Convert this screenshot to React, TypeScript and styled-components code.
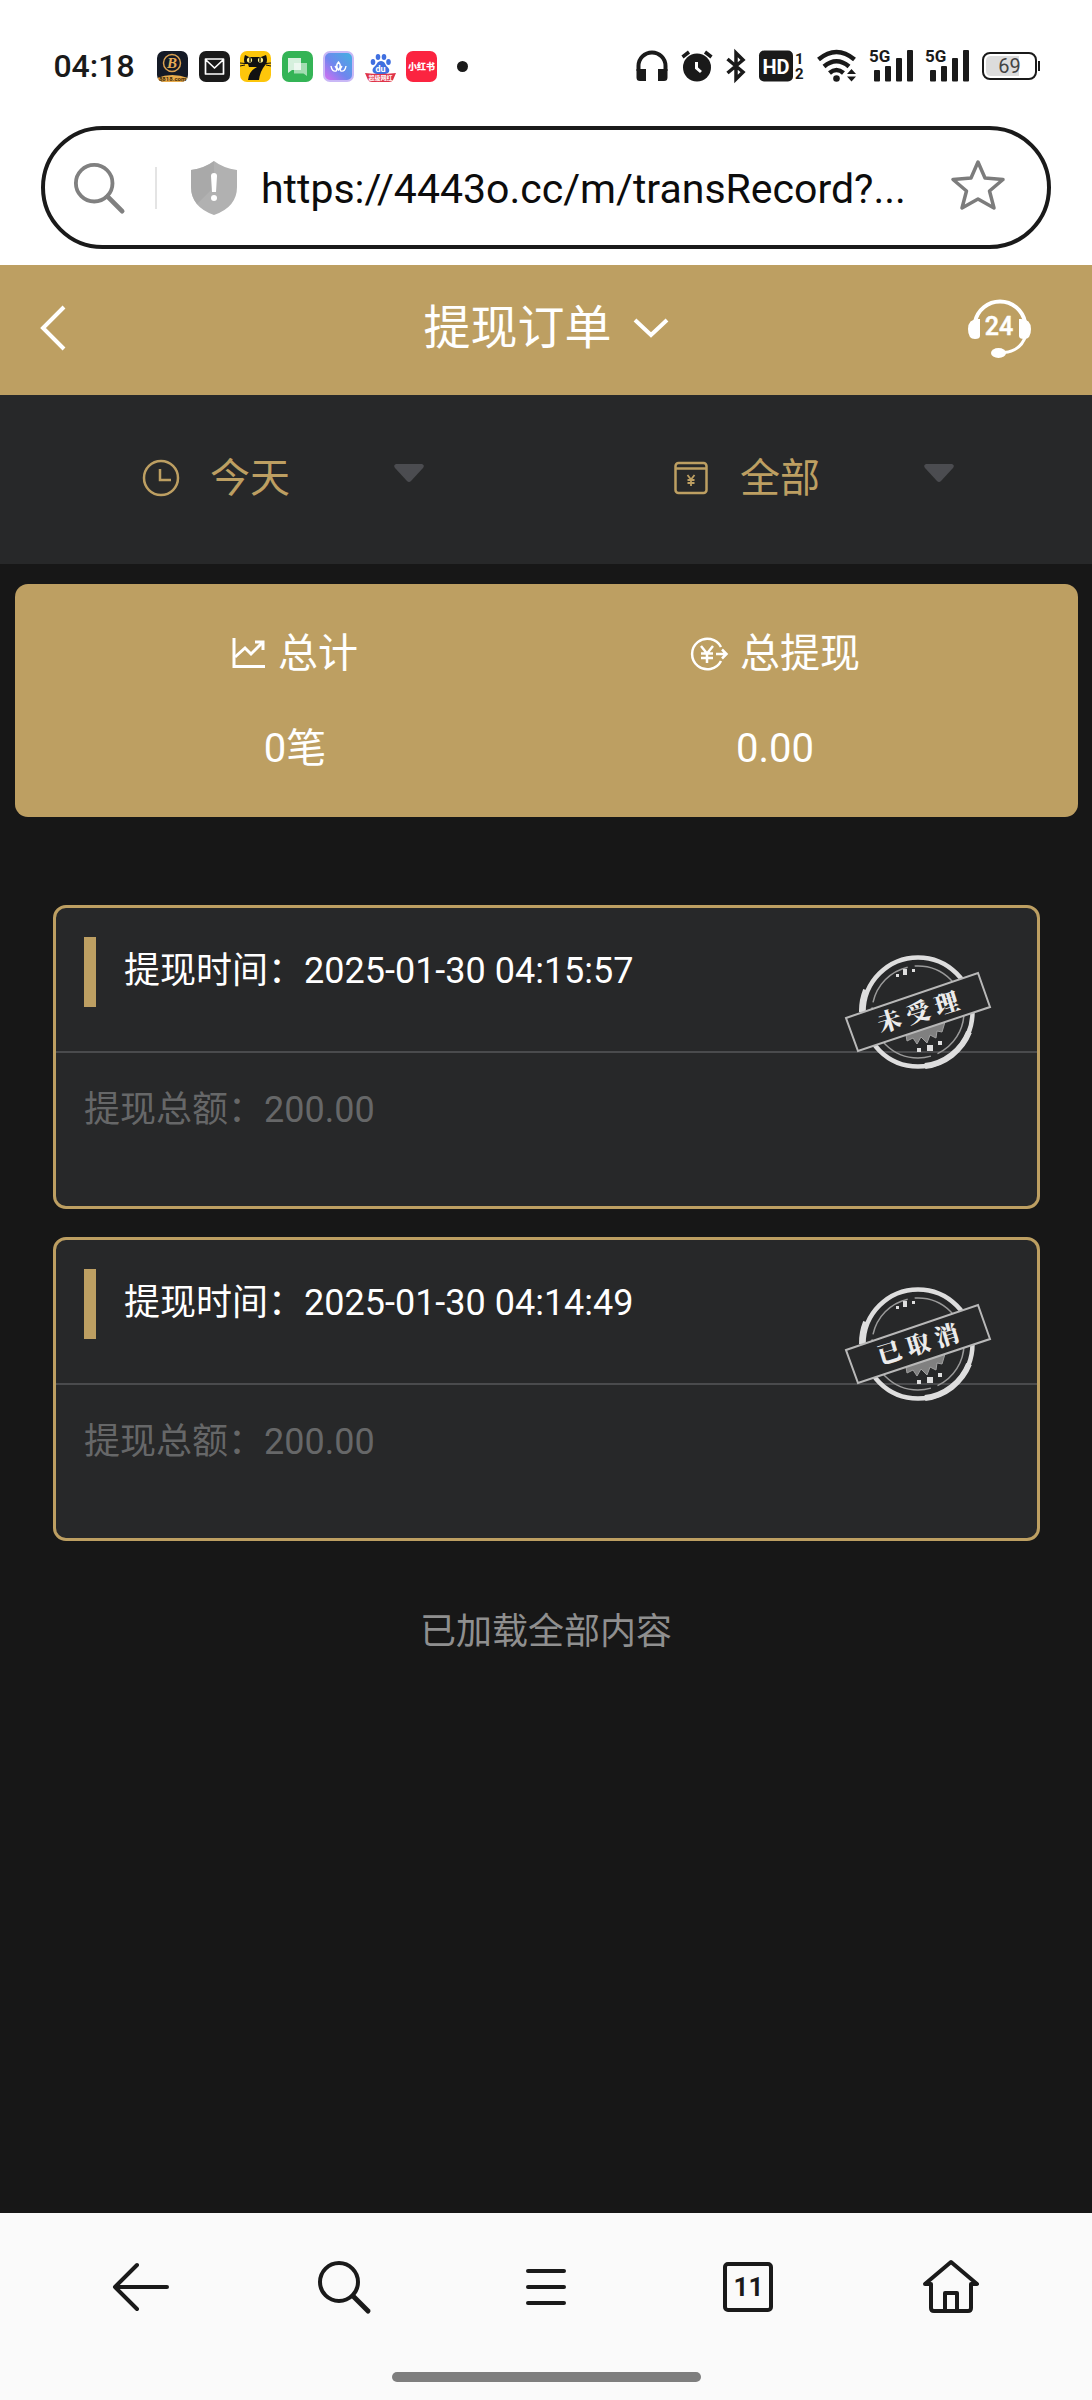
import React from "react";
import styled, { createGlobalStyle } from "styled-components";

const GOLD = "#bd9f62";
const INK = "#1a1a1a";
const FONT = `Roboto, "Noto Sans CJK SC", sans-serif`;

const GlobalStyle = createGlobalStyle`
  *, *::before, *::after { box-sizing: border-box; }
  body { margin: 0; background: #171717; font-family: ${FONT}; }
  button, input, select { font-family: inherit; margin: 0; }
  svg { display: block; flex: none; overflow: visible; }
`;

const Screen = styled.div`
  display: flex;
  flex-direction: column;
  min-height: 100vh;
  background: #171717;
`;

const StatusBar = styled.div`
  display: flex;
  align-items: center;
  justify-content: space-between;
  height: 112px;
  padding: 20px 52px 0;
  background: #fff;
  color: ${INK};
`;

const StatusGroup = styled.div`
  display: flex;
  align-items: center;
`;

const Clock = styled.time`
  font-size: 32px;
  line-height: 36px;
  font-weight: 500;
  width: 84px;
  text-align: center;
`;

const AppIcons = styled.div`
  display: flex;
  justify-content: space-between;
  width: 280px;
  margin: 0 20px 0 21px;
`;

const MoreDot = styled.span`
  width: 11px;
  height: 11px;
  border-radius: 50%;
  background: ${INK};
`;

const Indicators = styled(StatusGroup)`
  gap: 13px;
`;

const AddressArea = styled.div`
  padding: 14px 41px 16px;
  background: #fff;
`;

const AddressBar = styled.form`
  display: flex;
  align-items: center;
  height: 123px;
  padding: 0 42px 0 28px;
  border: 4px solid ${INK};
  border-radius: 62px;
  background: #fff;
`;

const BarDivider = styled.span`
  width: 2px;
  height: 42px;
  margin: 0 34px 0 30px;
  background: #e4e4e4;
`;

const UrlInput = styled.input`
  flex: 1;
  min-width: 0;
  height: 56px;
  margin: 0 24px;
  padding: 2px 0 0;
  border: 0;
  outline: 0;
  background: transparent;
  color: #0c0c0c;
  font-size: 41px;
  text-overflow: ellipsis;
`;

const IconButton = styled.button`
  display: flex;
  align-items: center;
  justify-content: center;
  padding: 0;
  border: 0;
  background: transparent;
  color: inherit;
  cursor: pointer;
`;

const StarButton = styled(IconButton)`
  padding-bottom: 5px;
`;

const PageHeader = styled.header`
  display: grid;
  grid-template-columns: 184px 1fr 184px;
  align-items: center;
  height: 130px;
  padding-bottom: 4px;
  background: ${GOLD};
  color: #fff;
`;

const BackButton = styled(IconButton)`
  justify-content: flex-start;
  padding-left: 40px;
`;

const TitleButton = styled(IconButton)`
  gap: 21px;
  font-size: 47px;
  line-height: 60px;
`;

const PageTitle = styled.h1`
  margin: 0;
  font: inherit;
`;

const Filters = styled.div`
  display: grid;
  grid-template-columns: 1fr 1fr;
  height: 169px;
  padding: 0 14px 4px 18px;
  background: #272829;
`;

const Filter = styled.label`
  display: flex;
  align-items: center;
  justify-content: center;
  color: ${GOLD};
`;

const FilterIcon = styled.span`
  display: flex;
  justify-content: center;
  width: 38px;
  margin-right: 30px;
`;

const FilterSelect = styled.select`
  appearance: none;
  width: 184px;
  height: 62px;
  padding: 2px 0 0;
  border: 0;
  outline: 0;
  background: transparent;
  color: ${GOLD};
  font-size: 40px;
`;

const Caret = styled.span`
  display: flex;
  padding-bottom: 8px;
`;

const Summary = styled.section`
  display: grid;
  grid-template-columns: 1fr 1fr;
  margin: 20px 14px 0 15px;
  padding: 40px 63px 38px 40px;
  border-radius: 13px;
  background: ${GOLD};
  color: #fff;
`;

const Total = styled.div`
  display: flex;
  flex-direction: column;
  align-items: center;
  gap: 35px;
  font-size: 40px;
  line-height: 60px;
`;

const TotalLabel = styled.div`
  display: flex;
  align-items: center;
  gap: 12px;
`;

const Records = styled.main`
  display: flex;
  flex-direction: column;
  gap: 28px;
  padding: 88px 52px 0 53px;
`;

const Card = styled.article`
  position: relative;
  height: 304px;
  border: 3px solid ${GOLD};
  border-radius: 13px;
  background: #272829;
  font-size: 36px;
  line-height: 52px;
`;

const CardHead = styled.div`
  display: flex;
  align-items: flex-start;
  height: 145px;
  padding: 29px 28px 0;
  border-bottom: 2px solid #4a4b4d;
  color: #fff;
`;

const Marker = styled.span`
  width: 12px;
  height: 70px;
  margin-right: 28px;
  background: ${GOLD};
`;

const When = styled.span`
  padding-top: 8px;
`;

const CardBody = styled.div`
  padding: 31px 28px;
  color: #666768;
`;

const StampBox = styled.div`
  position: absolute;
  top: 46px;
  right: 46px;
`;

const EndNote = styled.p`
  margin: 65px 0 0;
  color: #8f8f8f;
  font-size: 36px;
  line-height: 52px;
  text-align: center;
`;

const BrowserBar = styled.footer`
  display: flex;
  flex-direction: column;
  align-items: center;
  gap: 46px;
  margin-top: auto;
  padding: 34px 40px 18px;
  background: #fafafa;
  color: ${INK};
`;

const BrowserNav = styled.nav`
  display: flex;
  align-self: stretch;
`;

const NavButton = styled(IconButton)`
  flex: 1;
  height: 79px;
`;

const TabCount = styled.span`
  display: flex;
  align-items: center;
  justify-content: center;
  width: 50px;
  height: 50px;
  border: 4px solid ${INK};
  border-radius: 5px;
  font-size: 26px;
  font-weight: 700;
`;

const HomeIndicator = styled.span`
  width: 309px;
  height: 10px;
  border-radius: 5px;
  background: #7e7e7e;
`;

const CoinApp = () => (
  <svg width="31" height="31" viewBox="0 0 31 31">
    <defs><clipPath id="coin"><rect width="31" height="31" rx="7" /></clipPath></defs>
    <g clipPath="url(#coin)">
      <rect width="31" height="31" fill="#141a26" />
      <circle cx="15" cy="12" r="8.500" fill="none" stroke="#d9a050" strokeWidth="1.500" />
      <path d="M0 27Q15 21 31 27V31H0Z" fill="#e9ac4b" />
    </g>
    <text x="15" y="17" textAnchor="middle" fontSize="15" fontWeight="700" fontStyle="italic" fontFamily="Liberation Serif, serif" fill="#e8ab55">B</text>
    <text x="15.500" y="30" textAnchor="middle" fontSize="6" fontWeight="700" fill="#3b2608">8818.com</text>
  </svg>
);

const MailApp = () => (
  <svg width="31" height="31" viewBox="0 0 31 31" fill="none">
    <rect width="31" height="31" rx="7" fill={INK} />
    <path d="M6.500 8H24.500V23H6.500ZM7 9L15.500 17L24 9" stroke="#fff" strokeWidth="1.700" strokeLinejoin="round" />
  </svg>
);

const CatApp = () => (
  <svg width="31" height="31" viewBox="0 0 31 31">
    <rect width="31" height="31" rx="7" fill="#fdc60b" />
    <path d="M5 4L9 6H21L26 4Q28 9 26 13Q20 20 19 29H8Q9 20 17 16H9L8 13H5Q3 9 5 4Z" fill="#111" />
    <circle cx="9.500" cy="9" r="2.600" fill="#fdf08a" />
    <circle cx="20.500" cy="9" r="2.600" fill="#fdf08a" />
    <path d="M10 7V11M20 7V11" stroke="#111" strokeWidth="1.400" />
    <path d="M0 12L5 12.500M0 15L5 14M31 12L26 12.500M31 15L26 14" stroke="#111" />
  </svg>
);

const ChatApp = () => (
  <svg width="31" height="31" viewBox="0 0 31 31">
    <rect width="31" height="31" rx="7" fill="#34b456" />
    <path d="M12 12H25V25L21.500 22.500H12Z" fill="#fff" opacity=".55" />
    <path d="M6 7H19V19H10L6 22Z" fill="#fff" opacity=".8" />
  </svg>
);

const LotusApp = () => (
  <svg width="31" height="31" viewBox="0 0 31 31">
    <defs>
      <linearGradient id="lotus" x1="0" y1="1" x2="1" y2="0">
        <stop offset="0" stopColor="#e06bf2" />
        <stop offset=".45" stopColor="#6f86ee" />
        <stop offset="1" stopColor="#3fb4e0" />
      </linearGradient>
    </defs>
    <rect x="1" y="1" width="29" height="29" rx="6" fill="url(#lotus)" stroke="#c9b8f6" strokeWidth="2" />
    <path d="M15.500 11Q12 15 15.500 19Q19 15 15.500 11ZM8 15Q9 21 13 20Q15 19 12 15M23 15Q22 21 18 20Q16 19 19 15" fill="none" stroke="#fff" strokeWidth="1.400" />
  </svg>
);

const PawApp = () => (
  <svg width="31" height="31" viewBox="0 0 31 31">
    <g fill="#3f6fe0">
      <ellipse cx="8" cy="11" rx="2.300" ry="3" />
      <ellipse cx="13" cy="6" rx="2.300" ry="3" />
      <ellipse cx="19" cy="6" rx="2.300" ry="3" />
      <ellipse cx="23.500" cy="11" rx="2.300" ry="3" />
      <path d="M16 10C12 10 12 14 9 16C6 19 8 23 12 23H20C24 23 26 19 22.500 16C20 14 20 10 16 10Z" />
    </g>
    <text x="15.500" y="21" textAnchor="middle" fontSize="9" fontWeight="700" fill="#fff">du</text>
    <path d="M0 22Q15 24 31 22L28 29Q27 31 24 31H7Q4 31 3 29Z" fill="#df3348" />
    <text x="15.500" y="29" textAnchor="middle" fontSize="6" fontWeight="700" fill="#fff">超级网红</text>
  </svg>
);

const RedApp = () => (
  <svg width="31" height="31" viewBox="0 0 31 31">
    <rect width="31" height="31" rx="7" fill="#fb2440" />
    <text x="15.500" y="19" textAnchor="middle" fontSize="9" fontWeight="900" fill="#fff">小红书</text>
  </svg>
);

const Headphones = () => (
  <svg width="32" height="32" viewBox="0 0 32 32">
    <path d="M2.500 21V16A13.500 13.500 0 0 1 29.500 16V21" fill="none" stroke={INK} strokeWidth="4" />
    <path d="M.5 19H10V31H4Q.5 31 .5 27.500ZM31.500 19H22V31H28Q31.500 31 31.500 27.500Z" fill={INK} />
  </svg>
);

const Alarm = () => (
  <svg width="32" height="32" viewBox="0 0 32 32" fill="none">
    <circle cx="16" cy="17.500" r="14" fill={INK} />
    <path d="M1.500 7L8 2M30.500 7L24 2" stroke={INK} strokeWidth="3.500" />
    <path d="M15.500 12V18L20 22" stroke="#fff" strokeWidth="3" />
  </svg>
);

const Bluetooth = () => (
  <svg width="20" height="32" viewBox="0 0 20 32" fill="none">
    <path d="M1.500 9L17 22L10 29V3L17 10L1.500 23" stroke={INK} strokeWidth="3.500" />
  </svg>
);

const HdVoice = () => (
  <svg width="45" height="32" viewBox="0 0 45 32">
    <rect y=".5" width="34" height="31" rx="5" fill={INK} />
    <text x="17" y="23.500" textAnchor="middle" fontSize="20" fontWeight="700" fill="#fff">HD</text>
    <text x="36" y="14" fontSize="15" fontWeight="700" fill={INK}>1</text>
    <text x="36" y="29" fontSize="15" fontWeight="700" fill={INK}>2</text>
  </svg>
);

const Wifi = () => (
  <svg width="40" height="32" viewBox="0 0 40 32" fill="none">
    <path d="M1.500 9.500Q19.500 -5.500 37.500 9.500M7 16.500Q19.500 6 32 16.500M12.500 23Q19.500 17 26.500 23" stroke={INK} strokeWidth="4.500" />
    <circle cx="19.500" cy="28.500" r="3.300" fill={INK} />
    <path d="M30 24L34.500 19L39 24ZM30 26.500L34.500 31.500L39 26.500Z" fill={INK} />
  </svg>
);

const Signal = () => (
  <svg width="43" height="32" viewBox="0 0 43 32" fill={INK}>
    <text x="-1" y="12" fontSize="17" fontWeight="700">5G</text>
    <rect x="4" y="20" width="6" height="11.500" rx="1" />
    <rect x="15" y="16" width="6" height="15.500" rx="1" />
    <rect x="26" y="8" width="6" height="23.500" rx="1" />
    <rect x="37" y="0" width="6" height="31.500" rx="1" />
  </svg>
);

const Battery = () => (
  <svg width="58" height="28" viewBox="0 0 58 28">
    <rect x="1" y="1" width="53" height="26" rx="7" fill="#fff" stroke={INK} strokeWidth="2" />
    <path d="M9 4H37V24H9Q4 24 4 19V9Q4 4 9 4Z" fill="#dcdcdc" />
    <rect x="56" y="9" width="2" height="10" fill={INK} />
    <text x="27.500" y="21" textAnchor="middle" fontSize="20" fill="#444">69</text>
  </svg>
);

const SearchGlyph = ({ color, size = 54 }: { color: string; size?: number }) => (
  <svg width={size} height={size} viewBox="0 0 54 54" fill="none" stroke={color} strokeWidth="4" strokeLinecap="round">
    <circle cx="22" cy="22" r="19" />
    <path d="M36 36L51 51" strokeWidth="5" />
  </svg>
);

const Shield = () => (
  <svg width="46" height="54" viewBox="0 0 46 54">
    <path d="M23 0Q32 7 46 9V26Q46 46 23 54Q0 46 0 26V9Q14 7 23 0Z" fill="#b1b1b1" />
    <path d="M23 0Q14 7 0 9V26Q0 36 6 43L23 26Z" fill="#a3a3a3" opacity=".6" />
    <path d="M20 15Q20 12 23 12Q26 12 26 15L25 31H21Z" fill="#fff" />
    <circle cx="23" cy="37" r="3" fill="#fff" />
  </svg>
);

const Star = () => (
  <svg width="54" height="52" viewBox="0 0 54 52" fill="none" stroke="#7c7c7c" strokeWidth="3.500" strokeLinejoin="round">
    <path d="M27 3L34 19L52 20.500L38.500 32L43 49L27 40L11 49L15.500 32L2 20.500L20 19Z" />
  </svg>
);

const Support = () => (
  <svg width="64" height="62" viewBox="0 0 64 62" fill="none" stroke="#fff">
    <path d="M7 25A25.500 25.500 0 0 1 57 25" strokeWidth="4" />
    <path d="M58 38Q53 54 36 55.500" strokeWidth="3" />
    <path d="M12 22Q0 21 0 32Q0 42 7 42Q12 42 12 39ZM51 22Q63 21 63 32Q63 42 56 42Q51 42 51 39Z" fill="#fff" stroke="none" />
    <ellipse cx="30.500" cy="56" rx="7.500" ry="5" fill="#fff" stroke="none" />
    <text x="31" y="38" textAnchor="middle" fontSize="25" fontWeight="500" fill="#fff" stroke="#fff" strokeWidth=".5">24</text>
  </svg>
);

const ClockGlyph = () => (
  <svg width="38" height="38" viewBox="0 0 38 38" fill="none" stroke={GOLD} strokeWidth="2.500">
    <circle cx="19" cy="19" r="17" />
    <path d="M18 10V21H29" />
  </svg>
);

const WalletGlyph = () => (
  <svg width="34" height="34" viewBox="0 0 34 34" fill="none" stroke={GOLD} strokeWidth="2.500">
    <rect x="1.500" y="2" width="31" height="30" rx="3" />
    <path d="M2 7.500H32" />
    <path d="M13.500 14L17 18.500L20.500 14M17 18V25M13.500 19H20.500M13.500 22H20.500" strokeWidth="1.800" />
  </svg>
);

const CaretGlyph = () => (
  <svg width="30" height="19" viewBox="0 0 30 19">
    <path d="M2 0H28Q31 1 29 4L17 17Q15 19 13 17L1 4Q-1 1 2 0Z" fill="#4b4c50" />
  </svg>
);

const ChartGlyph = () => (
  <svg width="34" height="34" viewBox="0 0 34 34" fill="none" stroke="#fff" strokeWidth="3">
    <path d="M2 1V29.500H33" />
    <path d="M3 20L13 11L19 17L30 6" />
    <path d="M23 5H31V13" />
  </svg>
);

const PayoutGlyph = () => (
  <svg width="38" height="34" viewBox="0 0 38 34" fill="none" stroke="#fff" strokeWidth="2.500">
    <path d="M31 10A15.300 15.300 0 1 0 31 24" />
    <path d="M11 9L17 16.500L23 9M17 16V26M11 16.500H23M11 21H23" />
    <path d="M26 17H35M32 12.500L36.500 17L32 21.500" />
  </svg>
);

const Stamp = ({ word }: { word: string }) => (
  <svg width="146" height="116" viewBox="0 0 146 116" fill="none" stroke="#dedede">
    <circle cx="73" cy="58" r="54.500" strokeWidth="4.500" />
    <path d="M21 36A56 56 0 0 0 17 58M80 112A54.500 54.500 0 0 0 124 78" strokeWidth="6" />
    <circle cx="73" cy="58" r="46" stroke="#9a9a9a" strokeWidth="1.500" strokeDasharray="52 7 90 5" />
    <g fill="#dedede" stroke="none">
      <rect x="51" y="20" width="3" height="3" />
      <rect x="58" y="15" width="4" height="6" />
      <rect x="67" y="15" width="3" height="3" />
      <rect x="72" y="94" width="4" height="4" />
      <rect x="82" y="91" width="6" height="6" />
      <rect x="93" y="87" width="4" height="4" />
    </g>
    <path d="M55 80L100 68L97 78L92 77L91 84L85 81L82 89L76 83L72 90L68 84L62 87L61 81Z" fill="#808080" stroke="#a0a0a0" />
    <path d="M1 64L133 19L145 53L13 97Z" fill="#272829" stroke="#b8b8b8" strokeWidth="2" />
    <text
      transform="translate(73 58) rotate(-17)"
      y="9"
      textAnchor="middle"
      fontSize="24"
      fontWeight="900"
      fontFamily='"Noto Serif CJK SC", "Noto Sans CJK SC", serif'
      fill="#ececec"
      stroke="none"
    >
      {word}
    </text>
  </svg>
);

const records = [
  { time: "2025-01-30 04:15:57", amount: "200.00", status: "未 受 理" },
  { time: "2025-01-30 04:14:49", amount: "200.00", status: "已 取 消" },
];

export default function App() {
  return (
    <Screen>
      <GlobalStyle />
      <StatusBar>
        <StatusGroup>
          <Clock>04:18</Clock>
          <AppIcons>
            <CoinApp /><MailApp /><CatApp /><ChatApp /><LotusApp /><PawApp /><RedApp />
          </AppIcons>
          <MoreDot />
        </StatusGroup>
        <Indicators>
          <Headphones /><Alarm /><Bluetooth /><HdVoice /><Wifi /><Signal /><Signal /><Battery />
        </Indicators>
      </StatusBar>

      <AddressArea>
        <AddressBar onSubmit={(e) => e.preventDefault()}>
          <IconButton type="submit" aria-label="搜索"><SearchGlyph color="#808080" size={52} /></IconButton>
          <BarDivider />
          <Shield />
          <UrlInput type="text" aria-label="网址" defaultValue="https://4443o.cc/m/transRecord?..." />
          <StarButton type="button" aria-label="收藏"><Star /></StarButton>
        </AddressBar>
      </AddressArea>

      <PageHeader>
        <BackButton aria-label="返回">
          <svg width="26" height="46" viewBox="0 0 26 46" fill="none" stroke="#fff" strokeWidth="4">
            <path d="M24 2L3 23L24 44" />
          </svg>
        </BackButton>
        <TitleButton>
          <PageTitle>提现订单</PageTitle>
          <svg width="36" height="20" viewBox="0 0 36 20" fill="none" stroke="#fff" strokeWidth="4">
            <path d="M2 2L18 17L34 2" />
          </svg>
        </TitleButton>
        <IconButton aria-label="客服"><Support /></IconButton>
      </PageHeader>

      <Filters>
        <Filter>
          <FilterIcon><ClockGlyph /></FilterIcon>
          <FilterSelect aria-label="日期"><option>今天</option></FilterSelect>
          <Caret><CaretGlyph /></Caret>
        </Filter>
        <Filter>
          <FilterIcon><WalletGlyph /></FilterIcon>
          <FilterSelect aria-label="类型"><option>全部</option></FilterSelect>
          <Caret><CaretGlyph /></Caret>
        </Filter>
      </Filters>

      <Summary>
        <Total>
          <TotalLabel><ChartGlyph />总计</TotalLabel>
          <span>0笔</span>
        </Total>
        <Total>
          <TotalLabel><PayoutGlyph />总提现</TotalLabel>
          <span>0.00</span>
        </Total>
      </Summary>

      <Records>
        {records.map((r) => (
          <Card key={r.time}>
            <CardHead>
              <Marker />
              <When>提现时间：{r.time}</When>
            </CardHead>
            <CardBody>提现总额：{r.amount}</CardBody>
            <StampBox><Stamp word={r.status} /></StampBox>
          </Card>
        ))}
      </Records>
      <EndNote>已加载全部内容</EndNote>

      <BrowserBar>
        <BrowserNav>
          <NavButton aria-label="后退">
            <svg width="56" height="48" viewBox="0 0 56 48" fill="none" stroke={INK} strokeWidth="4" strokeLinecap="round" strokeLinejoin="round">
              <path d="M24 2L2 24L24 46M2 24H54" />
            </svg>
          </NavButton>
          <NavButton aria-label="搜索"><SearchGlyph color={INK} /></NavButton>
          <NavButton aria-label="菜单">
            <svg width="40" height="36" viewBox="0 0 40 36" stroke={INK} strokeWidth="4" strokeLinecap="round">
              <path d="M2 2H38M2 18H38M2 34H38" />
            </svg>
          </NavButton>
          <NavButton aria-label="标签页"><TabCount>11</TabCount></NavButton>
          <NavButton aria-label="主页">
            <svg width="56" height="54" viewBox="0 0 56 54" fill="none" stroke={INK} strokeWidth="4" strokeLinecap="round" strokeLinejoin="round">
              <path d="M8 24H2L28 2L54 24H48V48Q48 51 45 51H11Q8 51 8 48Z" />
              <path d="M22 51V33H34V51" />
            </svg>
          </NavButton>
        </BrowserNav>
        <HomeIndicator />
      </BrowserBar>
    </Screen>
  );
}
